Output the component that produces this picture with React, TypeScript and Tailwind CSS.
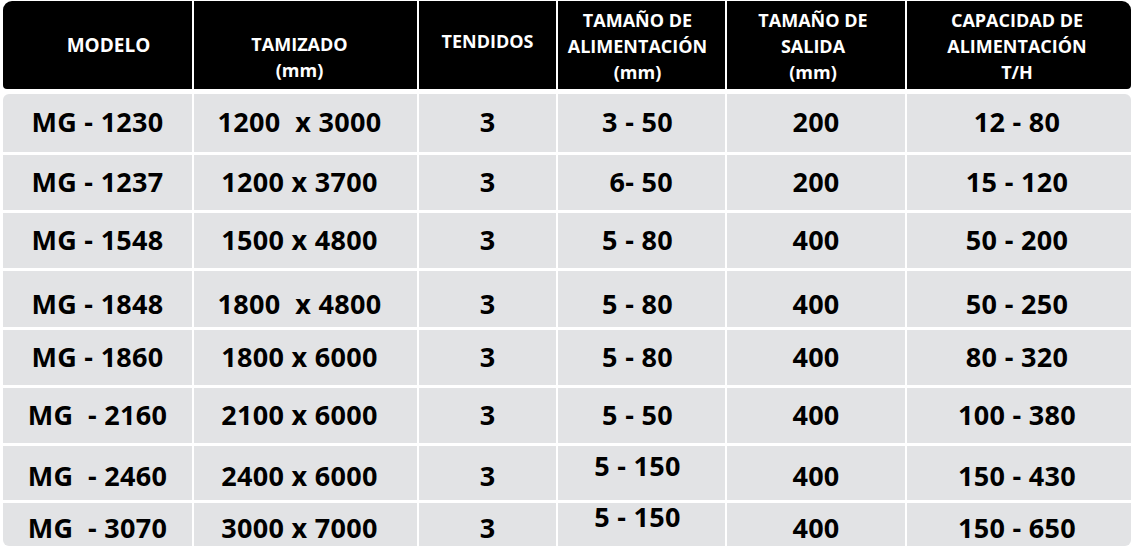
interface Row {
  h: string;
  pad?: string;
  feedPad?: string;
  cells: string[];
}

const rows: Row[] = [
  { h: 'h-[58px]', cells: ['MG - 1230', '1200  x 3000', '3', '3 - 50', '200', '12 - 80'] },
  { h: 'h-[55px]', cells: ['MG - 1237', '1200 x 3700', '3', ' 6- 50', '200', '15 - 120'] },
  { h: 'h-[55px]', cells: ['MG - 1548', '1500 x 4800', '3', '5 - 80', '400', '50 - 200'] },
  { h: 'h-[56px]', pad: 'pt-[8px]', cells: ['MG - 1848', '1800  x 4800', '3', '5 - 80', '400', '50 - 250'] },
  { h: 'h-[55px]', cells: ['MG - 1860', '1800 x 6000', '3', '5 - 80', '400', '80 - 320'] },
  { h: 'h-[55px]', cells: ['MG  - 2160', '2100 x 6000', '3', '5 - 50', '400', '100 - 380'] },
  { h: 'h-[54px]', pad: 'pt-[4px]', feedPad: 'pb-[16px]', cells: ['MG  - 2460', '2400 x 6000', '3', '5 - 150', '400', '150 - 430'] },
  { h: 'h-[43px]', pad: 'pt-[2px]', feedPad: 'pb-[20px]', cells: ['MG  - 3070', '3000 x 7000', '3', '5 - 150', '400', '150 - 650'] },
];

const cols = 'grid grid-cols-[189px_223px_137px_167px_178px_224px] gap-x-[2px]';

export default function App() {
  return (
    <div className="w-[1140px] h-[550px] bg-white pt-[1px] pl-[3px] font-['Open_Sans',sans-serif] font-bold">
      {/* header */}
      <div className={`${cols} h-[88px] w-[1128px] rounded-t-[9px] rounded-b-[4px] overflow-hidden text-white text-[18px] leading-[26px] text-center`}>
        <div className="bg-black pt-[31px] pl-[22px] text-[19px]">MODELO</div>
        <div className="bg-black pt-[30px] pr-[12px]">
          TAMIZADO
          <br />
          (mm)
        </div>
        <div className="bg-black pt-[27px]">TENDIDOS</div>
        <div className="bg-black pt-[6px] pr-[8px]">
          TAMAÑO DE
          <br />
          ALIMENTACIÓN
          <br />
          (mm)
        </div>
        <div className="bg-black pt-[6px] pr-[6px]">
          TAMAÑO DE
          <br />
          SALIDA
          <br />
          (mm)
        </div>
        <div className="bg-black pt-[6px] pr-[4px]">
          CAPACIDAD DE
          <br />
          ALIMENTACIÓN
          <br />
          T/H
        </div>
      </div>

      {/* body */}
      <div className="mt-[5px] w-[1128px] flex flex-col gap-y-[3px] rounded-[6px] overflow-hidden text-black text-[27px] leading-none tracking-[0.3px]">
        {rows.map((row, i) => (
          <div key={i} className={`${cols} ${row.h}`}>
            {row.cells.map((c, j) => {
              let p = row.pad ?? 'pb-[3px]';
              if (j === 3 && row.feedPad) p = row.feedPad;
              let x = '';
              if (j === 1) x = 'pr-[12px]';
              if (j === 3) x = 'pr-[8px]';
              if (j === 5) x = 'pr-[4px]';
              return (
                <div
                  key={j}
                  className={`bg-[#e2e3e5] flex items-center justify-center whitespace-pre ${p} ${x}`}
                >
                  {c}
                </div>
              );
            })}
          </div>
        ))}
      </div>
    </div>
  );
}
